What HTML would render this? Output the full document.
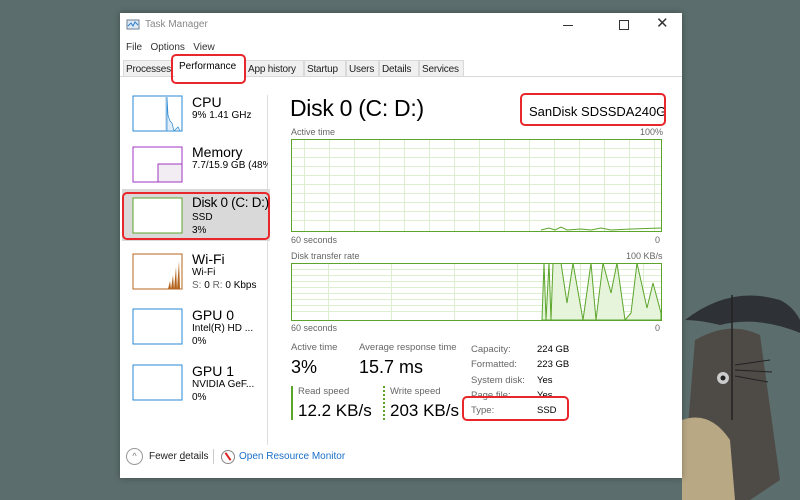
<!DOCTYPE html>
<html><head><meta charset="utf-8"><style>
*{margin:0;padding:0;box-sizing:border-box}
body{width:800px;height:500px;overflow:hidden;background:#5b6d6c;font-family:"Liberation Sans",sans-serif;position:relative;color:#000}
.a{position:absolute;white-space:nowrap}
.win{position:absolute;left:120px;top:13px;width:562px;height:465px;background:#fff;box-shadow:0 0 6px rgba(0,0,0,.3);overflow:hidden}
.g{color:#666}
.red{position:absolute;border:2.5px solid #e8262c;border-radius:5px}
.tab{position:absolute;top:47px;height:17px;border:1px solid #d9d9d9;background:#f0f0f0;font-size:10px;padding:3px 2px;color:#222;white-space:nowrap;overflow:hidden;letter-spacing:-.2px}
</style></head><body>
<svg class="a" style="left:640px;top:280px" width="160" height="220">
<path d="M45 40 Q90 5 140 20 Q160 30 165 55 Q120 35 80 45 Q60 40 45 40 Z" fill="#2e3236"/>
<path d="M55 60 Q90 40 120 55 L140 200 L110 220 L42 220 Z" fill="#4e4b47"/>
<path d="M42 140 Q70 130 90 160 L95 220 L42 220 Z" fill="#b9a884"/>
<circle cx="83" cy="98" r="6" fill="#ccc"/><circle cx="83" cy="98" r="2.5" fill="#222"/>
<line x1="92" y1="15" x2="92" y2="140" stroke="#222" stroke-width="1.5"/>
<path d="M95 85 L130 80 M95 90 L132 92 M95 96 L128 102" stroke="#222"/>
</svg>
<div class="win">
<svg class="a" style="left:6px;top:6px" width="14" height="12"><rect x="1" y="1" width="12" height="9" fill="#dfe9f3" stroke="#6b7f93"/><path d="M2 7 L5 4 L7 7 L9 3 L12 6" stroke="#2a7ed0" fill="none"/></svg>
<div class="a" style="left:25px;top:6px;font-size:10px;color:#888">Task Manager</div>
<div class="a" style="left:443px;top:12px;width:10px;border-top:1px solid #333"></div>
<div class="a" style="left:499px;top:7px;width:10px;height:10px;border:1px solid #333"></div>
<div class="a" style="left:536px;top:1px;font-size:15px;color:#333">✕</div>
<div class="a" style="left:6px;top:29px;font-size:10px;color:#333">File&nbsp;&nbsp;&nbsp;Options&nbsp;&nbsp;&nbsp;View</div>
<div class="a" style="left:0;top:63px;width:562px;border-top:1px solid #d9d9d9"></div>
<div class="tab" style="left:3px;width:50px">Processes</div>
<div class="a" style="left:55px;top:45px;width:70px;height:20px;background:#fff;font-size:10px;padding:3px 4px">Performance</div>
<div class="tab" style="left:125px;width:59px">App history</div>
<div class="tab" style="left:184px;width:42px">Startup</div>
<div class="tab" style="left:226px;width:33px">Users</div>
<div class="tab" style="left:259px;width:40px">Details</div>
<div class="tab" style="left:299px;width:45px">Services</div>
<div class="red" style="left:51px;top:41px;width:75px;height:30px"></div>
<div class="a" style="left:147px;top:82px;height:350px;border-left:1px solid #ddd"></div>
<div class="a" style="left:2px;top:176px;width:148px;height:52px;background:#d9d9d9"></div>
<div class="red" style="left:2px;top:179px;width:148px;height:48px"></div>
<svg class="a" style="left:12px;top:82px" width="52" height="38"><rect x="1" y="1" width="49" height="35" fill="#fff" stroke="#2a8ad4"/><line x1="34" y1="1" x2="34" y2="36" stroke="#9cc4e6"/><path d="M35 2 L36 20 L38 26 L40 28 L42 36 L46 32 L48 36 L35 36Z" fill="#e1eef9" stroke="#2a8ad4" stroke-width=".7"/></svg>
<svg class="a" style="left:12px;top:133px" width="52" height="38"><rect x="1" y="1" width="49" height="35" fill="#fff" stroke="#a036c0"/><rect x="26" y="18" width="24" height="18" fill="#f1edf3" stroke="#a036c0"/></svg>
<svg class="a" style="left:12px;top:184px" width="52" height="38"><rect x="1" y="1" width="49" height="35" fill="#fff" stroke="#5ca52b"/></svg>
<svg class="a" style="left:12px;top:240px" width="52" height="38"><rect x="1" y="1" width="49" height="35" fill="#fff" stroke="#b5651d"/><path d="M36 36 L38 28 L39 36 L41 22 L42 36 L44 14 L45 36 L47 8 L48 36Z" fill="#b5651d"/></svg>
<svg class="a" style="left:12px;top:295px" width="52" height="38"><rect x="1" y="1" width="49" height="35" fill="#fff" stroke="#2a8ad4"/></svg>
<svg class="a" style="left:12px;top:351px" width="52" height="38"><rect x="1" y="1" width="49" height="35" fill="#fff" stroke="#2a8ad4"/></svg>
<div class="a" style="left:72px;top:81px;font-size:14px">CPU</div>
<div class="a" style="left:72px;top:97px;font-size:10px">9% 1.41 GHz</div>
<div class="a" style="left:72px;top:131px;font-size:14px">Memory</div>
<div class="a" style="left:72px;top:147px;font-size:10px;width:76px;overflow:hidden">7.7/15.9 GB (48%)</div>
<div class="a" style="left:72px;top:182px;font-size:13.5px;letter-spacing:-.3px">Disk 0 (C: D:)</div>
<div class="a" style="left:72px;top:199px;font-size:10px">SSD</div>
<div class="a" style="left:72px;top:212px;font-size:10px">3%</div>
<div class="a" style="left:72px;top:238px;font-size:14px">Wi-Fi</div>
<div class="a" style="left:72px;top:254px;font-size:10px">Wi-Fi</div>
<div class="a" style="left:72px;top:267px;font-size:10px"><span class="g">S:</span> 0 <span class="g">R:</span> 0 Kbps</div>
<div class="a" style="left:72px;top:294px;font-size:14px">GPU 0</div>
<div class="a" style="left:72px;top:310px;font-size:10px">Intel(R) HD ...</div>
<div class="a" style="left:72px;top:323px;font-size:10px">0%</div>
<div class="a" style="left:72px;top:350px;font-size:14px">GPU 1</div>
<div class="a" style="left:72px;top:366px;font-size:10px">NVIDIA GeF...</div>
<div class="a" style="left:72px;top:379px;font-size:10px">0%</div>
<div class="a" style="left:170px;top:82px;font-size:23px;letter-spacing:-.3px">Disk 0 (C: D:)</div>
<div class="a" style="left:409px;top:91px;font-size:13px">SanDisk SDSSDA240G</div>
<div class="red" style="left:400px;top:80px;width:146px;height:33px"></div>
<div class="a g" style="left:171px;top:114px;font-size:9px">Active time</div>
<div class="a g" style="left:520px;top:114px;font-size:9px">100%</div>
<svg class="a" style="left:171px;top:126px" width="371" height="93">
<g stroke="#dcefd0" stroke-width="1">
<path d="M0 9.5H371M0 18.5H371M0 27.5H371M0 36.5H371M0 45.5H371M0 54.5H371M0 63.5H371M0 72.5H371M0 81.5H371"/>
<path d="M13.5 0V93M38.5 0V93M63.5 0V93M88.5 0V93M113.5 0V93M138.5 0V93M163.5 0V93M188.5 0V93M213.5 0V93M238.5 0V93M263.5 0V93M288.5 0V93M313.5 0V93M338.5 0V93M363.5 0V93"/></g>
<path d="M250 91 L258 89 L264 91 L270 88 L276 91 L290 90 L300 91 L310 89 L320 91 L340 90 L370 89" stroke="#5ca52b" fill="none"/>
<rect x=".5" y=".5" width="370" height="92" fill="none" stroke="#5ca52b"/></svg>
<div class="a g" style="left:171px;top:222px;font-size:9px">60 seconds</div>
<div class="a g" style="left:535px;top:222px;font-size:9px">0</div>
<div class="a g" style="left:171px;top:238px;font-size:9px">Disk transfer rate</div>
<div class="a g" style="left:506px;top:238px;font-size:9px">100 KB/s</div>
<svg class="a" style="left:171px;top:250px" width="371" height="58">
<g stroke="#dcefd0"><path d="M0 6.5H371M0 12.5H371M0 18.5H371M0 24.5H371M0 30.5H371M0 36.5H371M0 42.5H371M0 48.5H371"/><path d="M37.5 0V58M100.5 0V58M163.5 0V58M226.5 0V58M289.5 0V58M352.5 0V58"/></g>
<path d="M251 57 L253 0 L255 57 L258 0 L260 57 L262 0 L270 0 L276 40 L282 0 L292 57 L300 0 L305 57 L312 0 L320 30 L326 0 L334 57 L340 50 L346 0 L356 45 L362 20 L370 50 L370 57Z" fill="#e6f4dc" stroke="#5ca52b"/>
<rect x=".5" y=".5" width="370" height="57" fill="none" stroke="#5ca52b"/></svg>
<div class="a g" style="left:171px;top:310px;font-size:9px">60 seconds</div>
<div class="a g" style="left:535px;top:310px;font-size:9px">0</div>
<div class="a g" style="left:171px;top:329px;font-size:9.5px">Active time</div>
<div class="a" style="left:171px;top:344px;font-size:18px">3%</div>
<div class="a g" style="left:239px;top:329px;font-size:9.5px">Average response time</div>
<div class="a" style="left:239px;top:344px;font-size:18px">15.7 ms</div>
<div class="a" style="left:171px;top:373px;height:34px;border-left:2px solid #5ca52b"></div>
<div class="a g" style="left:178px;top:373px;font-size:9.5px">Read speed</div>
<div class="a" style="left:178px;top:388px;font-size:17px">12.2 KB/s</div>
<div class="a" style="left:263px;top:373px;height:34px;border-left:2px dotted #5ca52b"></div>
<div class="a g" style="left:270px;top:373px;font-size:9.5px">Write speed</div>
<div class="a" style="left:270px;top:388px;font-size:17px">203 KB/s</div>
<div class="a g" style="left:351px;top:329px;font-size:9.5px;line-height:15.3px">Capacity:<br>Formatted:<br>System disk:<br>Page file:<br>Type:</div>
<div class="a" style="left:417px;top:329px;font-size:9.5px;line-height:15.3px">224 GB<br>223 GB<br>Yes<br>Yes<br>SSD</div>
<div class="red" style="left:342px;top:383px;width:107px;height:25px"></div>
<div class="a" style="left:6px;top:435px;width:17px;height:17px;border:1px solid #999;border-radius:50%;font-size:9px;color:#777;text-align:center;line-height:15px">^</div>
<div class="a" style="left:29px;top:438px;font-size:10px;color:#222">Fewer <u>d</u>etails</div>
<div class="a" style="left:93px;top:436px;height:15px;border-left:1px solid #ccc"></div>
<div class="a" style="left:101px;top:437px;width:14px;height:14px;border:1.5px solid #888;border-radius:50%"><div style="position:absolute;left:5px;top:1px;width:2px;height:9px;background:#d22;transform:rotate(-35deg)"></div></div>
<div class="a" style="left:119px;top:438px;font-size:10px;color:#1a6fc9">Open Resource Monitor</div>
</div>
</body></html>
